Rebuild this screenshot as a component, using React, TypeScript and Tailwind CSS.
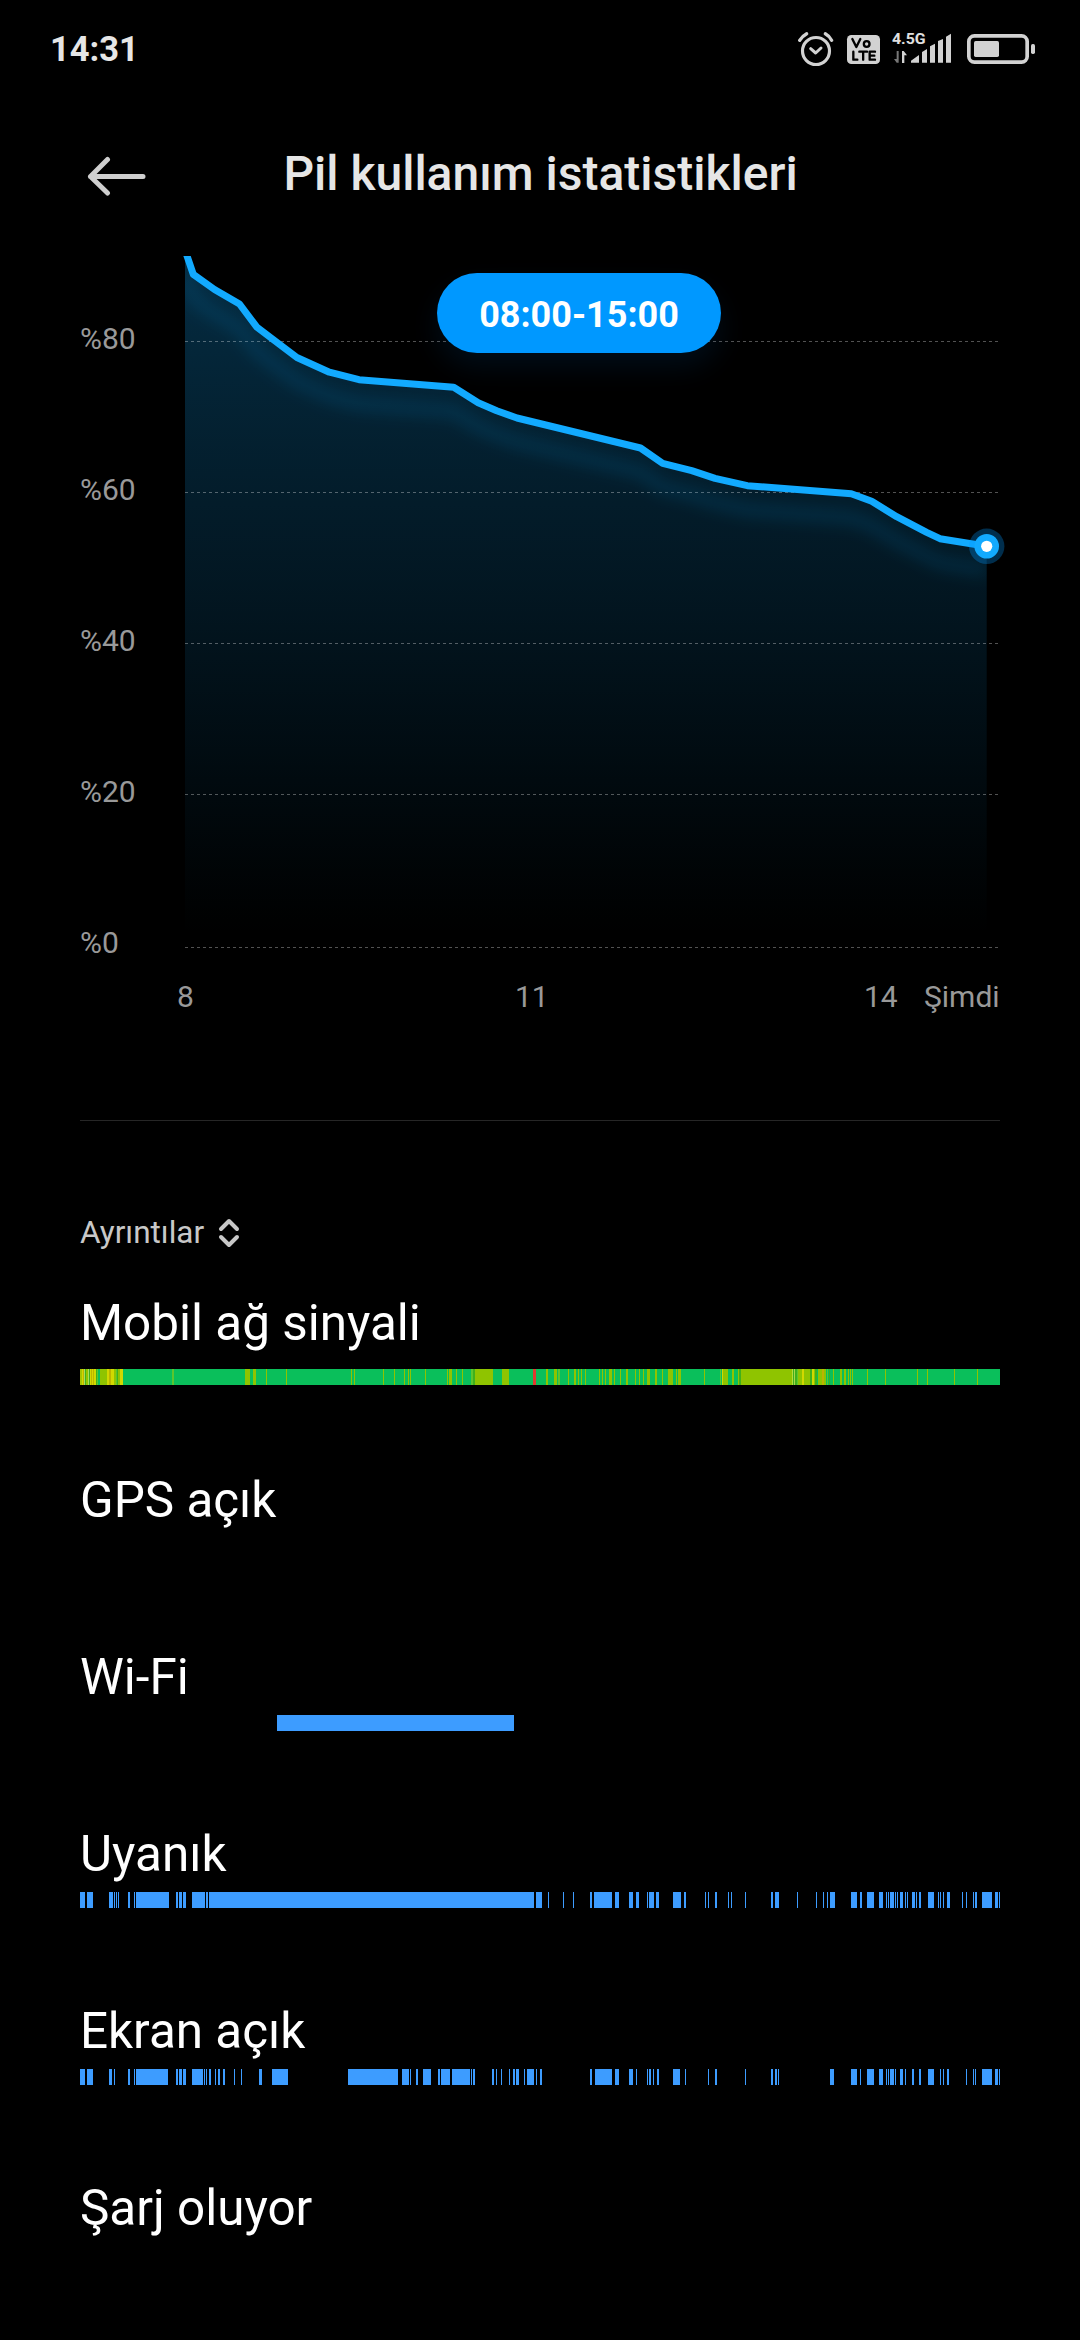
import { useId } from 'react';

type Segment = [start: number, end: number];
type ColorSegment = [start: number, end: number, color: string];

const OLIVE = '#8fc400';
const LIME = '#5cc62e';
const LEAF = '#3fb01c';
const YELLOW = '#d2d800';
const AMBER = '#bdb400';

const levels = [80, 60, 40, 20];

// Battery level over time, in chart pixels
const points = [
  [185, 250], [193.3, 274.3], [214.5, 289.5], [239.5, 304], [257, 327.3], [278.4, 343.5], [296.9, 357.5],
  [329.4, 372.2], [359, 379.7], [453.7, 387.3], [478.2, 402.7], [496.7, 410.7], [517, 418], [640.5, 448],
  [662.7, 463.3], [691.7, 470.7], [715, 478.3], [747.3, 485.7], [851.3, 493.7], [871.7, 501.3],
  [896.7, 516.7], [926.7, 532.3], [940, 538.7], [986.7, 546.3],
];

const signal: ColorSegment[] = [
  [0, 2, '#a3c400'], [2, 3, YELLOW], [3, 4, AMBER], [4, 5, '#a8e05a'], [5, 6, LEAF], [6, 8, OLIVE],
  [8, 9, '#a8e05a'], [9, 10, LEAF], [10, 11, YELLOW], [11, 12, AMBER], [12, 13, YELLOW], [13, 14, AMBER],
  [14, 16, YELLOW], [16, 17, LEAF], [17, 18, LIME], [20, 27, OLIVE], [27, 29, YELLOW], [29, 31, AMBER],
  [31, 34, YELLOW], [34, 36, OLIVE], [36, 37, LIME], [37, 38, LEAF], [38, 40, OLIVE], [40, 43, YELLOW],
  [92, 94, LIME], [165, 170, OLIVE], [173, 176, OLIVE], [186, 187, OLIVE], [206, 207, OLIVE],
  [271, 272, OLIVE], [274, 275, OLIVE], [303, 304, OLIVE], [314, 315, OLIVE], [324, 325, OLIVE],
  [328, 329, OLIVE], [330, 331, OLIVE], [345, 346, OLIVE], [367, 368, OLIVE], [369, 372, OLIVE],
  [376, 377, OLIVE], [382, 383, OLIVE], [391, 393, LIME], [393, 395, LEAF], [395, 413, OLIVE],
  [422, 429, OLIVE], [453, 456, '#e23a30'], [466, 468, OLIVE], [474, 477, OLIVE], [478, 480, LIME],
  [488, 489, OLIVE], [494, 496, OLIVE], [498, 499, OLIVE], [501, 502, OLIVE], [505, 506, OLIVE],
  [519, 520, OLIVE], [522, 523, OLIVE], [525, 526, OLIVE], [529, 532, OLIVE], [534, 535, OLIVE],
  [540, 541, OLIVE], [546, 548, OLIVE], [555, 556, OLIVE], [559, 560, OLIVE], [563, 564, OLIVE],
  [567, 570, OLIVE], [575, 577, OLIVE], [582, 583, OLIVE], [588, 593, OLIVE], [596, 597, OLIVE],
  [598, 601, OLIVE], [624, 625, OLIVE], [640, 641, LIME], [642, 643, YELLOW], [643, 648, OLIVE],
  [652, 654, OLIVE], [658, 659, OLIVE], [659, 661, LEAF], [661, 712, OLIVE], [712, 713, '#b5dc3c'],
  [713, 714, LEAF], [714, 715, '#a8d84a'], [715, 717, LEAF], [717, 718, LIME], [718, 722, OLIVE],
  [722, 724, YELLOW], [724, 730, OLIVE], [730, 732, LEAF], [732, 734, YELLOW], [734, 735, OLIVE],
  [735, 737, LEAF], [738, 742, OLIVE], [742, 744, AMBER], [744, 746, OLIVE], [747, 748, LIME],
  [749, 750, LEAF], [753, 754, OLIVE], [760, 762, OLIVE], [764, 766, OLIVE], [768, 769, OLIVE],
  [770, 771, OLIVE], [772, 773, OLIVE], [787, 788, OLIVE], [805, 806, OLIVE], [837, 838, OLIVE],
  [847, 848, OLIVE], [874, 875, OLIVE], [897, 898, OLIVE],
];

const wifi: Segment[] = [[197, 434]];

const awake: Segment[] = [
  [0, 5], [7, 13], [29, 33], [34, 35], [36, 37], [38, 39], [48, 50], [54, 55], [56, 89], [96, 98], [99, 102],
  [103, 106], [112, 125], [126, 128], [129, 454], [456, 462], [468, 469], [483, 484], [493, 494], [510, 512],
  [514, 532], [535, 539], [549, 553], [556, 559], [567, 568], [569, 574], [576, 579], [593, 601], [604, 606],
  [625, 626], [628, 629], [635, 637], [648, 649], [651, 652], [665, 666], [691, 693], [695, 699], [717, 718],
  [736, 737], [743, 744], [747, 748], [750, 755], [771, 777], [780, 782], [787, 794], [799, 803], [806, 807],
  [808, 809], [810, 814], [815, 816], [817, 818], [820, 823], [825, 826], [827, 828], [832, 835], [836, 837],
  [839, 841], [848, 854], [858, 859], [860, 861], [863, 864], [867, 870], [882, 883], [886, 887], [893, 894],
  [895, 897], [902, 912], [915, 918], [919, 920],
];

const screenOn: Segment[] = [
  [0, 5], [7, 13], [29, 32], [34, 35], [48, 50], [54, 55], [56, 88], [96, 98], [99, 102], [103, 106], [112, 123],
  [124, 125], [126, 127], [129, 131], [135, 136], [138, 140], [143, 145], [154, 155], [161, 162], [179, 182],
  [192, 208], [268, 318], [322, 329], [330, 331], [336, 338], [343, 351], [358, 360], [361, 370], [372, 390],
  [391, 392], [393, 395], [412, 414], [416, 417], [421, 422], [429, 430], [433, 435], [436, 439], [444, 445],
  [447, 454], [456, 457], [460, 462], [510, 512], [515, 532], [535, 539], [549, 553], [556, 557], [567, 568],
  [569, 571], [573, 574], [577, 579], [593, 600], [605, 606], [628, 629], [635, 637], [665, 666], [691, 693],
  [695, 697], [698, 699], [750, 754], [771, 777], [780, 781], [787, 794], [799, 803], [806, 807], [808, 809],
  [810, 814], [815, 816], [820, 823], [825, 826], [832, 834], [839, 841], [848, 854], [860, 861], [863, 864],
  [867, 869], [886, 887], [893, 894], [895, 896], [902, 912], [915, 918], [919, 920],
];

function StatusBar() {
  return (
    <div className="flex h-[97px] items-center justify-between pl-[50px] pr-[45px]">
      <span className="pt-px text-[34.5px] leading-[40px] font-bold text-[#e6e6e6]">14:31</span>
      <div className="flex h-[65px] items-center">
        <svg className="h-[65px] w-[66px]" viewBox="36 0 198 195" fill="none" stroke="#d2d2d2" strokeLinecap="round">
          <circle cx="108" cy="105" r="40.500" strokeWidth="9.500" />
          <path d="M92 98 L107 111 L123 96" strokeWidth="9" strokeLinejoin="round" />
          <path d="M59 73 Q67 60 80 53 M136 53 Q149 60 155 73" strokeWidth="10" />
        </svg>
        <svg className="-ml-[15px] h-[65px] w-[45px]" viewBox="189 0 135 195">
          <rect x="201" y="57" width="99" height="87" rx="13" fill="#d2d2d2" />
          <g fill="none" stroke="#000" strokeWidth="7" strokeLinecap="round" strokeLinejoin="round">
            <path d="M217 69 L229 93 L241 69" />
            <circle cx="260" cy="84" r="8.5" />
            <path d="M220 107 V131 H232 M238 107 H261 M249.500 107 V131 M285 107 H269 V131 H285 M269 119 H283" />
          </g>
        </svg>
        <svg className="h-[65px] w-[72px]" viewBox="324 0 216 195">
          <text x="336" y="84" fontSize="45" fontWeight="700" fill="#e0e0e0" textLength="101" lengthAdjust="spacingAndGlyphs">
            4.5G
          </text>
          <path d="M356 105 V140 H350 L342 129 H350 V105 Z" fill="#777" />
          <path d="M366 141 V105 H371 L381 118 H373 V141 Z" fill="#d2d2d2" />
          <path
            d="M393 140 V134 L417 117 V140 Z M426 140 V108 L441 99 V140 Z M450 140 V91 L465 83 V140 Z M474 140 V75 L489 69 V140 Z M498 140 V62 L513 53 V140 Z"
            fill="#d2d2d2"
          />
        </svg>
        <svg className="h-[65px] w-[75px]" viewBox="540 0 225 195">
          <rect x="566.500" y="59.500" width="175" height="79" rx="17" fill="none" stroke="#d2d2d2" strokeWidth="11" />
          <rect x="582" y="75" width="75" height="48" rx="5" fill="#d2d2d2" />
          <rect x="753" y="84" width="12" height="30" rx="5" fill="#d2d2d2" />
        </svg>
      </div>
    </div>
  );
}

function Header() {
  return (
    <header className="flex h-[159px] items-start px-[87px] pt-[59px]">
      <svg className="h-[40px] w-[60px]" viewBox="0 0 60 40" fill="none" stroke="#cfcfcf" strokeWidth="5" strokeLinecap="round" strokeLinejoin="round">
        <path d="M3.500 20.500 H56 M20.500 3.500 L3.500 20.500 L20.500 37" />
      </svg>
      <h1 className="-mt-[10px] flex-1 pr-[59px] text-center text-[48px] leading-[56px] font-medium text-[#e6e6e6]">
        Pil kullanım istatistikleri
      </h1>
    </header>
  );
}

function BatteryChart() {
  const id = useId();
  const line = points.map(([x, y]) => `${x},${y}`).join(' ');

  return (
    <section className="relative h-[768px] text-[30px] leading-[36px] text-[#999]">
      <div className="flex">
        <div className="flex w-[185px] flex-col gap-[115px] pl-[80px] pt-[65px]">
          {levels.map((level) => (
            <span key={level}>%{level}</span>
          ))}
          <span>%0</span>
        </div>
        <svg className="-ml-[25px] h-[700px] w-[860px]" viewBox="160 256 860 700">
          <defs>
            <linearGradient id={`${id}-fill`} x1="0" x2="0" y1="256" y2="935" gradientUnits="userSpaceOnUse">
              <stop offset="0" stopColor="#12aaff" stopOpacity="0.26" />
              <stop offset="1" stopColor="#12aaff" stopOpacity="0" />
            </linearGradient>
            <filter id={`${id}-glow`} x="-10%" y="-20%" width="120%" height="140%">
              <feGaussianBlur stdDeviation="8" />
            </filter>
            <clipPath id={`${id}-area`}>
              <polygon points={`185,250 ${line} 986.700,946 185,946`} />
            </clipPath>
          </defs>
          <polygon points={`185,250 ${line} 986.700,946 185,946`} fill={`url(#${id}-fill)`} />
          {[341.5, 492.5, 643.5, 794.5, 947.5].map((y) => (
            <line key={y} x1="185" x2="999" y1={y} y2={y} stroke="#fff" strokeOpacity="0.32" strokeDasharray="3 3" />
          ))}
          <g clipPath={`url(#${id}-area)`}>
            <polyline
              points={line}
              transform="translate(0 24)"
              fill="none"
              stroke="#12aaff"
              strokeOpacity="0.16"
              strokeWidth="10"
              filter={`url(#${id}-glow)`}
            />
          </g>
          <polyline points={line} fill="none" stroke="#12aaff" strokeWidth="7" strokeLinejoin="round" />
          <circle cx="986.700" cy="546.300" r="17.700" fill="#0098ff" fillOpacity="0.3" />
          <circle cx="986.700" cy="546.300" r="12.300" fill="#12aaff" />
          <circle cx="986.700" cy="546.300" r="5.600" fill="#fff" />
        </svg>
      </div>
      <div className="mt-[18px] flex pl-[177px]">
        <span className="w-[338px]">8</span>
        <span className="w-[349px]">11</span>
        <span className="w-[60px]">14</span>
        <span>Şimdi</span>
      </div>
      <div className="absolute top-[17px] left-[437px] flex h-[80px] w-[284px] items-center justify-center rounded-full bg-[#0098ff] pt-[3px] text-[36px] font-bold text-white shadow-[0_14px_28px_rgba(0,110,200,0.12)]">
        08:00-15:00
      </div>
    </section>
  );
}

function Timeline({ segments }: { segments: (Segment | ColorSegment)[] }) {
  return (
    <svg className="block h-4 w-[920px]" viewBox="0 0 920 16" shapeRendering="crispEdges">
      {segments.map(([start, end, color]) => (
        <rect key={start} x={start} width={end - start} height="16" fill={color ?? '#3d9cff'} />
      ))}
    </svg>
  );
}

function DetailRow({ title, segments }: { title: string; segments?: (Segment | ColorSegment)[] }) {
  return (
    <div className="h-[177px]">
      <h2 className="mb-[9px] text-[49.4px] leading-[58px] text-white">{title}</h2>
      {segments && <Timeline segments={segments} />}
    </div>
  );
}

export default function App() {
  return (
    <main className="h-[2340px] w-[1080px] overflow-hidden bg-black font-['Roboto',sans-serif]">
      <StatusBar />
      <Header />
      <BatteryChart />
      <section className="px-[80px] pt-[96px]">
        <div className="h-px bg-[#262626]" />
        <div className="mt-[94px] flex h-[36px] items-center gap-[14px]">
          <span className="text-[31.5px] leading-[36px] text-[#c8c8c8]">Ayrıntılar</span>
          <svg className="h-[30px] w-[22px]" viewBox="0 0 22 30" fill="none" stroke="#c8c8c8" strokeWidth="4" strokeLinecap="round" strokeLinejoin="round">
            <path d="M3 11 L11 3 L19 11 M3 19 L11 27 L19 19" />
          </svg>
        </div>
        <div className="mt-[43px]">
          <div className="h-[177px]">
            <h2 className="mb-[17px] text-[49.4px] leading-[58px] text-white">Mobil ağ sinyali</h2>
            <div className="bg-[#0abf5b]">
              <Timeline segments={signal} />
            </div>
          </div>
          <DetailRow title="GPS açık" />
          <DetailRow title="Wi-Fi" segments={wifi} />
          <DetailRow title="Uyanık" segments={awake} />
          <DetailRow title="Ekran açık" segments={screenOn} />
          <DetailRow title="Şarj oluyor" />
        </div>
      </section>
    </main>
  );
}
